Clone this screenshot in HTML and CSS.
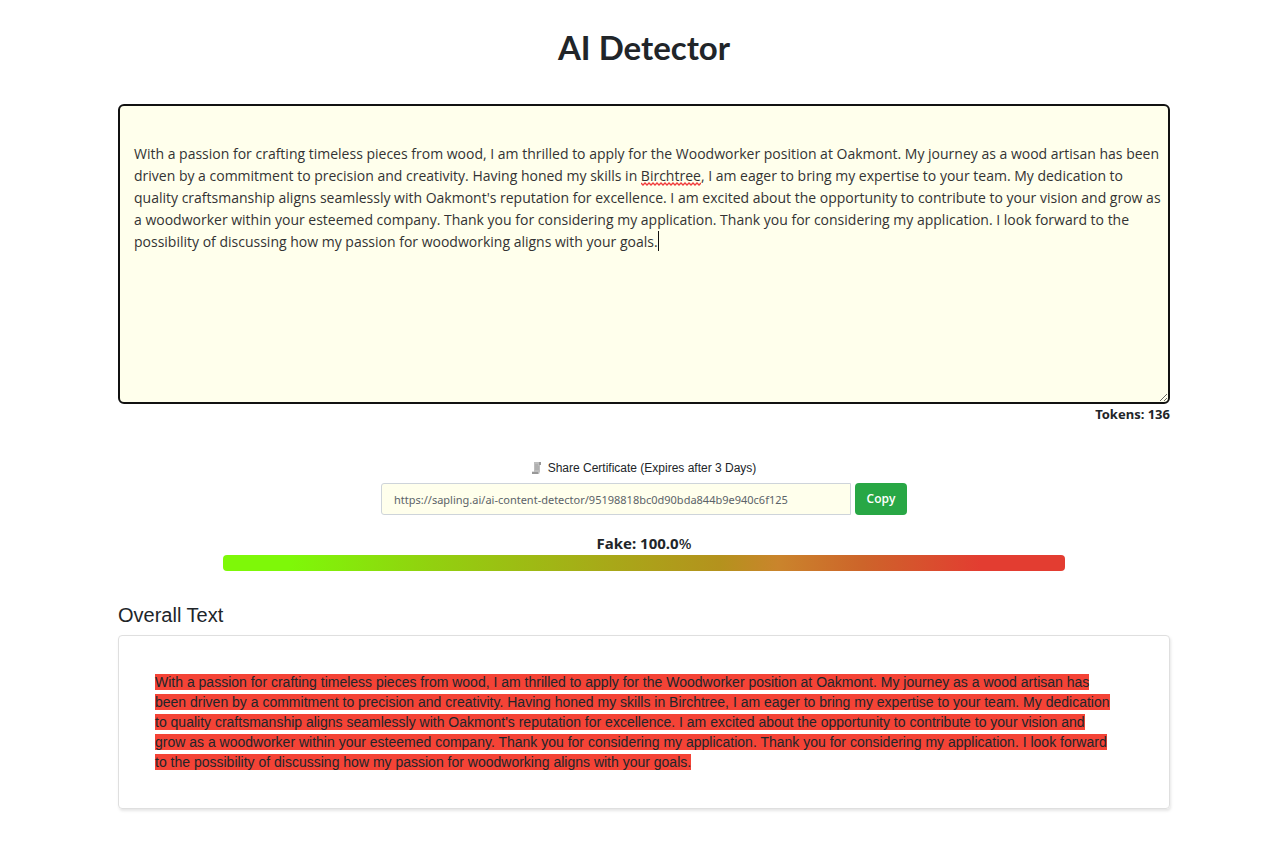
FILE: index.html
```html
<!DOCTYPE html>
<html lang="en">
<head>
<meta charset="utf-8">
<title>AI Detector</title>
<link rel="stylesheet" href="styles.css">
</head>
<body>
<main class="page">
  <h1 class="title">AI Detector</h1>
  <div class="editor">
    <textarea class="editor-input" aria-label="Text to check" spellcheck="false">

With a passion for crafting timeless pieces from wood, I am thrilled to apply for the Woodworker position at Oakmont. My journey as a wood artisan has been driven by a commitment to precision and creativity. Having honed my skills in Birchtree, I am eager to bring my expertise to your team. My dedication to quality craftsmanship aligns seamlessly with Oakmont's reputation for excellence. I am excited about the opportunity to contribute to your vision and grow as a woodworker within your esteemed company. Thank you for considering my application. Thank you for considering my application. I look forward to the possibility of discussing how my passion for woodworking aligns with your goals.</textarea>
    <svg class="squiggle" width="60" height="4" viewBox="0 0 60 4" aria-hidden="true"><path d="M0 1l2 2 2-2 2 2 2-2 2 2 2-2 2 2 2-2 2 2 2-2 2 2 2-2 2 2 2-2 2 2 2-2 2 2 2-2 2 2 2-2 2 2 2-2 2 2 2-2 2 2 2-2 2 2 2-2 2 2 2-2" fill="none" stroke="#f03a3a" stroke-width="1.300"/></svg>
    <span class="caret"></span>
  </div>
  <p class="tokens">Tokens: 136</p>
  <section class="share">
    <label class="share-label" for="share-link">
      <svg class="scroll-icon" width="10" height="12" viewBox="0 0 10 12" aria-hidden="true"><path d="M2 0h7v3H8v6.500L7 12H0V9.500h2z" fill="#bdbdbd"/><path d="M7 0h2v3H7zM0 10h6v2H0z" fill="#989898"/><path d="M3 3h3M3 5h4M3 7h4" stroke="#a3a3a3"/></svg>
      Share Certificate (Expires after 3 Days)
    </label>
    <div class="share-row">
      <input class="share-input" id="share-link" type="text" readonly value="https://sapling.ai/ai-content-detector/95198818bc0d90bda844b9e940c6f125">
      <button class="copy" type="button">Copy</button>
    </div>
  </section>
  <section class="score">
    <p class="score-label">Fake: 100.0<span class="percent">%</span></p>
    <div class="score-bar"></div>
  </section>
  <h2 class="subtitle">Overall Text</h2>
  <div class="result"><mark class="flagged">With a passion for crafting timeless pieces from wood, I am thrilled to apply for the Woodworker position at Oakmont. My journey as a wood artisan has<br>been driven by a commitment to precision and creativity. Having honed my skills in Birchtree, I am eager to bring my expertise to your team. My dedication<br>to quality craftsmanship aligns seamlessly with Oakmont's reputation for excellence. I am excited about the opportunity to contribute to your vision and<br>grow as a woodworker within your esteemed company. Thank you for considering my application. Thank you for considering my application. I look forward<br>to the possibility of discussing how my passion for woodworking aligns with your goals.</mark></div>
</main>
</body>
</html>
```
FILE: styles.css
```css
* { box-sizing: border-box; }
body {
  margin: 0;
  background: #fff;
  color: #212529;
  font-family: "Liberation Sans", Arial, sans-serif;
}
.page { padding: 24px 104px 32px 118px; }
.title {
  margin: 0 0 34px;
  font: 700 33px/46px Lato, sans-serif;
  text-align: center;
}
.editor { position: relative; }
.editor-input {
  display: block;
  width: 100%;
  height: 300px;
  padding: 15px 4px 14px 14px;
  border: 2px solid #111;
  border-radius: 6px;
  background: #ffffec;
  color: #333;
  font: 14px/22px "Open Sans", sans-serif;
  outline: none;
  overflow: hidden;
}
.squiggle {
  position: absolute;
  left: 523px;
  top: 78px;
}
.caret {
  position: absolute;
  left: 540px;
  top: 127px;
  width: 1px;
  height: 20px;
  background: #111;
}
.tokens {
  margin: 0;
  font: 700 13px/20px "Noto Sans", sans-serif;
  text-align: right;
}
.share {
  display: flex;
  flex-direction: column;
  align-items: center;
  gap: 7px;
  padding-top: 36px;
}
.share-label {
  display: flex;
  align-items: center;
  gap: 6px;
  font-size: 12px;
  line-height: 16px;
}
.share-row { display: flex; gap: 4px; }
.share-input {
  width: 470px;
  height: 32px;
  padding: 0 12px;
  border: 1px solid #ced4da;
  border-radius: 3px 0 0 3px;
  background: #ffffec;
  color: #5c6369;
  font: 11px/20px "Noto Sans", sans-serif;
}
.copy {
  width: 52px;
  height: 32px;
  padding: 0;
  border: 0;
  border-radius: 4px;
  background: #28a745;
  color: #fff;
  font: 600 12px/20px "Open Sans", sans-serif;
}
.score { padding-top: 16px; }
.score-label {
  margin: 0;
  font: 700 15px/24px "Noto Sans", sans-serif;
  text-align: center;
}
.percent { font-weight: 500; }
.score-bar {
  width: 80%;
  height: 16px;
  margin: 0 auto;
  border-radius: 4px;
  background: linear-gradient(90deg, #7ef808 0, #7ef808 8%, #92d00f 25%, #a8a818 46%, #b4921d 59%, #ca842c 66%, #cd642a 76%, #e33d31 90%, #e33d31 100%);
}
.subtitle {
  margin: 32px 0 8px;
  font-size: 20px;
  font-weight: 400;
  line-height: 24px;
}
.result {
  padding: 36px;
  border: 1px solid #dfdfdf;
  border-radius: 4px;
  box-shadow: 1px 2px 3px rgba(0, 0, 0, 0.1);
  font-size: 14px;
  line-height: 20px;
}
.flagged { background: #f44336; color: #212529; }
```
